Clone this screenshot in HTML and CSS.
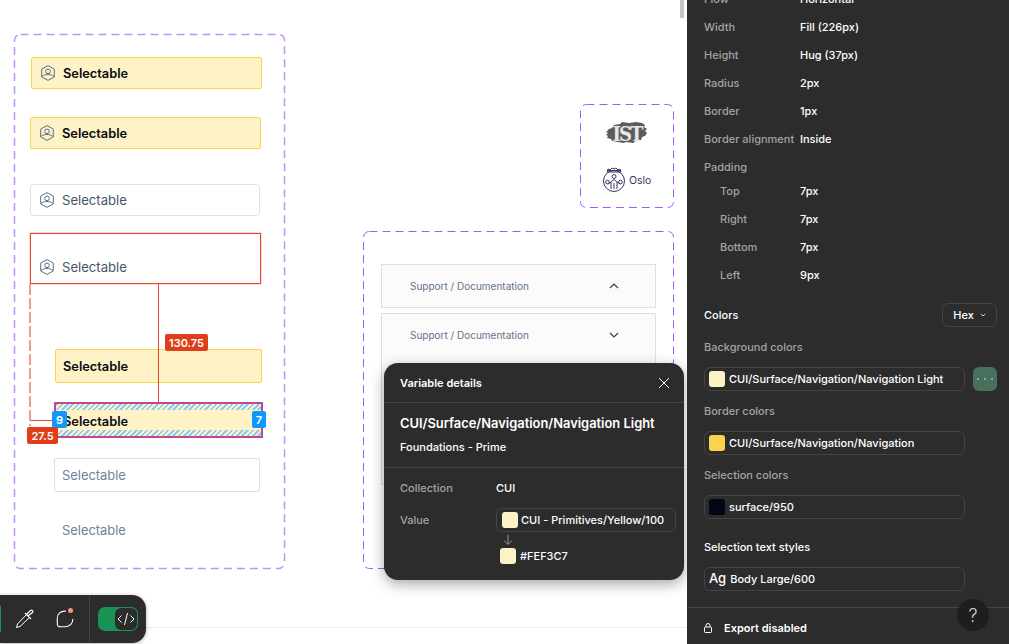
FILE: index.html
```html
<!DOCTYPE html>
<html lang="en">
<head>
    <meta charset="utf-8">
    <title>Selectable - Dev mode</title>
    <link rel="stylesheet" href="styles.css">
</head>
<body>
<svg class="defs" width="0" height="0">
    <symbol id="hexuser" viewBox="0 0 16 16">
        <path d="M8 .6l6.300 3.500v7.800L8 15.400l-6.300-3.500V4.100z" fill="none" stroke="currentColor" stroke-width="1" stroke-linejoin="round"/>
        <circle cx="8" cy="6.400" r="2.300" fill="none" stroke="currentColor" stroke-width="1"/>
        <path d="M2 11.500c1.400-1.400 3.600-2 6-2s4.600.6 6 2" fill="none" stroke="currentColor" stroke-width="1"/>
    </symbol>
</svg>

<div class="page">
    <div class="canvas">
        <div class="scroll-thumb"></div>
        <div class="floor-line"></div>

        <!-- frame: selectable states -->
        <svg class="frame frame-states"><rect rx="6" ry="6"></rect></svg>
        <div class="item item-1 yellow"><svg class="hex"><use href="#hexuser"/></svg><span class="lbl strong">Selectable</span></div>
        <div class="item item-2 yellow"><svg class="hex"><use href="#hexuser"/></svg><span class="lbl strong">Selectable</span></div>
        <div class="item item-3 plain"><svg class="hex"><use href="#hexuser"/></svg><span class="lbl">Selectable</span></div>
        <div class="item item-4 measured"><svg class="hex"><use href="#hexuser"/></svg><span class="lbl">Selectable</span></div>
        <div class="item item-5 yellow"><span class="lbl strong">Selectable</span></div>
        <div class="item item-6 yellow picked">
            <div class="hatch hatch-top"></div>
            <div class="hatch hatch-bottom"></div>
            <span class="lbl strong">Selectable</span>
        </div>
        <div class="item item-7 outline"><span class="lbl muted">Selectable</span></div>
        <div class="item item-8"><span class="lbl muted">Selectable</span></div>

        <!-- red measure lines -->
        <div class="guide guide-v"></div>
        <div class="guide guide-h"></div>
        <div class="guide-dash"></div>
        <div class="tag tag-red tag-130">130.75</div>
        <div class="tag tag-blue tag-9">9</div>
        <div class="tag tag-blue tag-7">7</div>
        <div class="tag tag-red tag-27">27.5</div>

        <!-- frame: logos -->
        <svg class="frame frame-logos"><rect rx="6" ry="6"></rect></svg>
        <div class="logo-ist">
            <svg width="44" height="26" viewBox="0 0 44 26"><path d="M1 11l3-3 3-1 2-3 6-1 2-2 7 1 7-1 6 1 3 2-1 2 3 2-2 2 2 2-2 3-3 1-1 3-5 1-3 2-7-1-2 1-6-1-6-1-1-2-4-1 1-2-2-1 2-2z" fill="#5c5c5c"/></svg>
            <span class="ist-text">IST</span>
        </div>
        <div class="logo-oslo">
            <svg width="24" height="27" viewBox="0 0 24 27" fill="none" stroke="#3b3566" stroke-width="1">
                <path d="M6 4l2 1 2-2 2 1 2-1 2 2 2-1 1 3H5z"/>
                <path d="M6 5.500h12"/>
                <circle cx="12" cy="16" r="10.500"/>
                <circle cx="12" cy="11.500" r="2"/>
                <path d="M9 24v-7l3-2.500 3 2.500v7M9 17l-3 2M15 17l3 2M12 18v6"/>
                <circle cx="5.500" cy="17" r="1.800"/>
                <circle cx="18.500" cy="17" r="1.800"/>
            </svg>
            <span class="oslo-name">Oslo</span>
        </div>

        <!-- frame: accordion -->
        <svg class="frame frame-accordion"><rect rx="6" ry="6"></rect></svg>
        <div class="acc acc-open">
            <span>Support / Documentation</span>
            <svg width="12" height="12" viewBox="0 0 12 12"><path d="M2 8l4-4 4 4" fill="none" stroke="#334155" stroke-width="1.200"/></svg>
        </div>
        <div class="acc acc-closed">
            <span>Support / Documentation</span>
            <svg width="12" height="12" viewBox="0 0 12 12"><path d="M2 4l4 4 4-4" fill="none" stroke="#334155" stroke-width="1.200"/></svg>
        </div>

        <!-- bottom toolbar -->
        <div class="toolbar">
            <div class="tool-active"></div>
            <svg class="tool-dropper" width="20" height="20" viewBox="0 0 20 20" fill="none" stroke="#fff" stroke-width="1">
                <path d="M11.500 5.500l-9 9.500-1 3.500 3.500-1 9.500-9z"/>
                <path d="M10 4l6 6M13 7l4.500-3.500c1-1.200-.6-3.200-2-2L12 5" stroke-width="1.200"/>
            </svg>
            <div class="tool-comment">
                <svg width="20" height="20" viewBox="0 0 20 20" fill="none" stroke="#fff" stroke-width="1.100"><path d="M11 2.200C6 1.500 2 5 2.200 9.800c.1 2.500.1 5.500.3 6.400.2.900.7 1.300 1.600 1.400 2 .2 4.500.2 6.400.1 4.300-.3 7.500-3.300 7.300-7.700"/></svg>
                <i class="dot"></i>
            </div>
            <div class="tool-sep"></div>
            <div class="toggle">
                <div class="knob">
                    <svg width="18" height="14" viewBox="0 0 18 14" fill="none" stroke="#fff" stroke-width="1"><path d="M4.500 3.500L1 7l3.500 3.500M13.500 3.500L17 7l-3.500 3.500M10.500 1l-3 12"/></svg>
                </div>
            </div>
        </div>

        <!-- variable popup -->
        <div class="popup">
            <div class="popup-head">
                <span>Variable details</span>
                <svg width="12" height="12" viewBox="0 0 12 12"><path d="M1 1l10 10M11 1L1 11" stroke="#fff" stroke-width="1"/></svg>
            </div>
            <div class="popup-title">
                <h3>CUI/Surface/Navigation/Navigation Light</h3>
                <p>Foundations - Prime</p>
            </div>
            <div class="popup-body">
                <div class="popup-row"><span class="popup-key">Collection</span><span>CUI</span></div>
                <div class="popup-row popup-value">
                    <span class="popup-key">Value</span>
                    <div class="chain">
                        <div class="chip"><i class="swatch sw-light"></i>CUI - Primitives/Yellow/100</div>
                        <svg class="arrow" width="12" height="12" viewBox="0 0 12 12" fill="none" stroke="#9a9a9a" stroke-width="1"><path d="M6 1v9M2 6.500L6 10.500l4-4"/></svg>
                        <div class="hex-line"><i class="swatch sw-light"></i>#FEF3C7</div>
                    </div>
                </div>
            </div>
        </div>
    </div>

    <aside class="panel">
        <div class="props">
            <div class="prop"><span>Flow</span><b>Horizontal</b></div>
            <div class="prop"><span>Width</span><b>Fill (226px)</b></div>
            <div class="prop"><span>Height</span><b>Hug (37px)</b></div>
            <div class="prop"><span>Radius</span><b>2px</b></div>
            <div class="prop"><span>Border</span><b>1px</b></div>
            <div class="prop"><span>Border alignment</span><b>Inside</b></div>
            <div class="prop"><span>Padding</span></div>
            <div class="sub">
                <div class="prop"><span>Top</span><b>7px</b></div>
                <div class="prop"><span>Right</span><b>7px</b></div>
                <div class="prop"><span>Bottom</span><b>7px</b></div>
                <div class="prop"><span>Left</span><b>9px</b></div>
            </div>
        </div>

        <div class="colors-head">
            <span>Colors</span>
            <div class="hex-btn">Hex <svg width="6" height="4" viewBox="0 0 6 4"><path d="M.8.8L3 3 5.200.8" fill="none" stroke="#fff" stroke-width=".8"/></svg></div>
        </div>

        <div class="group-title">Background colors</div>
        <div class="field-row">
            <div class="field"><i class="swatch sw-light"></i>CUI/Surface/Navigation/Navigation Light</div>
            <div class="more"><i></i><i></i><i></i></div>
        </div>
        <div class="group-title">Border colors</div>
        <div class="field-row">
            <div class="field"><i class="swatch sw-nav"></i>CUI/Surface/Navigation/Navigation</div>
        </div>
        <div class="group-title">Selection colors</div>
        <div class="field-row">
            <div class="field"><i class="swatch sw-dark"></i>surface/950</div>
        </div>
        <div class="group-title group-white">Selection text styles</div>
        <div class="field-row">
            <div class="field"><span class="ag">Ag</span>Body Large/600</div>
        </div>

        <div class="export">
            <svg width="8" height="10" viewBox="0 0 8 10" fill="none" stroke="#fff" stroke-width="1"><rect x=".5" y="4" width="7" height="5.500" rx=".8"/><path d="M2 4V2.500a2 2 0 0 1 4 0V4"/></svg>
            <span>Export disabled</span>
        </div>
        <div class="help">?</div>
    </aside>
</div>
</body>
</html>
```

FILE: styles.css
```css
* {
    margin: 0;
    padding: 0;
    box-sizing: border-box;
}
html, body {
    height: 100%;
    overflow: hidden;
}
body {
    font-family: "Inter", "Liberation Sans", sans-serif;
    font-size: 11px;
    color: #fff;
    background: #fff;
}
.defs {
    position: absolute;
}
.page {
    display: flex;
    width: 1009px;
    height: 644px;
}

/* canvas: everything in here sits on a free design canvas */
.canvas {
    position: relative;
    width: 687px;
    height: 644px;
    overflow: hidden;
    background: #fff;
}
.scroll-thumb {
    position: absolute;
    left: 680px;
    top: 0;
    width: 4px;
    height: 18px;
    background: #c4c4c4;
}
.floor-line {
    position: absolute;
    left: 146px;
    top: 627px;
    width: 541px;
    height: 1px;
    background: #eeeeee;
}
.frame {
    position: absolute;
    overflow: visible;
}
.frame rect {
    x: .5px;
    y: .5px;
    width: calc(100% - 1px);
    height: calc(100% - 1px);
    fill: none;
    stroke: #a259ff;
    stroke-dasharray: 8 5;
}
.frame-states {
    left: 14px;
    top: 34px;
    width: 271px;
    height: 535px;
    opacity: .6;
}
.frame-states rect {
    stroke: #9747ff;
    stroke-width: 1.500;
}
.frame-logos {
    left: 580px;
    top: 104px;
    width: 94px;
    height: 104px;
}
.frame-accordion {
    left: 363px;
    top: 231px;
    width: 311px;
    height: 338px;
}

.item {
    position: absolute;
    display: flex;
    align-items: center;
    padding-left: 8px;
    border-radius: 2px;
}
.item-1 { left: 31px; top: 57px; width: 231px; height: 32px; }
.item-2 { left: 30px; top: 117px; width: 231px; height: 32px; }
.item-3 { left: 30px; top: 184px; width: 230px; height: 32px; }
.item-4 { left: 30px; top: 233px; width: 231px; height: 51px; align-items: flex-end; padding-bottom: 8px; }
.item-5 { left: 55px; top: 349px; width: 207px; height: 34px; padding-left: 7px; }
.item-6 { left: 54px; top: 402px; width: 209px; height: 36px; }
.item-7 { left: 54px; top: 458px; width: 206px; height: 34px; padding-left: 7px; }
.item-8 { left: 54px; top: 513px; width: 206px; height: 34px; padding-left: 8px; }

.yellow {
    background: #fef3c7;
    border: 1px solid #fcd34d;
}
.plain {
    background: #fff;
    border: 1px solid #d9e0ec;
    border-radius: 4px;
}
.outline {
    background: #fff;
    border: 1px solid #d9e0ec;
}
.measured {
    border: 1px solid #e5482a;
    border-radius: 0;
    box-shadow: 0 0 0 .5px rgba(229, 72, 42, .4);
}
.picked {
    border: 1px solid #9747ff;
    border-radius: 0;
    box-shadow: inset 0 0 0 1px #e5482a;
}
.hatch {
    position: absolute;
    left: 1px;
    right: 1px;
    height: 6px;
    background: repeating-linear-gradient(135deg, #8ccbf5 0, #8ccbf5 1.750px, #fef3c7 1.750px, #fef3c7 3.750px);
}
.hatch-top { top: 1px; }
.hatch-bottom { bottom: 1px; }
.hex {
    width: 16px;
    height: 16px;
    color: #5d6e88;
    flex: none;
    margin-right: 7px;
}
.lbl {
    font-size: 13.100px;
    line-height: 16px;
    color: #475569;
}
.strong {
    padding-top: 2px;
    font-size: 12.800px;
    font-weight: 600;
    color: #0a0a14;
    box-sizing: content-box;
}
.picked .strong {
    padding-top: 3px;
}
.muted {
    padding-top: 2px;
    font-size: 12.900px;
    color: #71819a;
    box-sizing: content-box;
}

.guide {
    position: absolute;
    background: #e5482a;
}
.guide-v {
    left: 158px;
    top: 284px;
    width: 1px;
    height: 119px;
}
.guide-h {
    left: 30px;
    top: 420px;
    width: 25px;
    height: 1px;
}
.guide-dash {
    position: absolute;
    left: 29px;
    top: 284px;
    width: 2px;
    height: 142px;
    background: repeating-linear-gradient(180deg, #f19e8c 0, #f19e8c 11px, transparent 11px, transparent 14px);
}
.tag {
    position: absolute;
    display: flex;
    align-items: center;
    justify-content: center;
    border-radius: 2px;
    font-size: 11px;
    font-weight: 600;
    color: #fff;
}
.tag-red { background: #e03e1a; }
.tag-blue { background: #0d99ff; }
.tag-130 { left: 165px; top: 334px; width: 43px; height: 17px; }
.tag-27 { left: 27px; top: 427px; width: 31px; height: 17px; }
.tag-9 { left: 52px; top: 411px; width: 15px; height: 17px; }
.tag-7 { left: 252px; top: 411px; width: 14px; height: 17px; }

.logo-ist {
    position: absolute;
    left: 605px;
    top: 121px;
    width: 44px;
    height: 26px;
}
.ist-text {
    position: absolute;
    left: 0;
    right: 0;
    top: 1px;
    text-align: center;
    font-family: "DejaVu Serif Condensed", "DejaVu Serif", serif;
    font-weight: 700;
    font-size: 20px;
    line-height: 24px;
    letter-spacing: -2px;
    color: #e6e6e6;
}
.logo-oslo {
    position: absolute;
    left: 602px;
    top: 165px;
    display: flex;
    align-items: center;
    gap: 3px;
    font-size: 10.500px;
    color: #3b3566;
}
.oslo-name {
    padding-top: 3px;
}

.acc {
    position: absolute;
    left: 381px;
    width: 275px;
    display: flex;
    justify-content: space-between;
    align-items: center;
    padding: 0 35px 0 28px;
    background: #fbfbfc;
    border: 1px solid #d9e0ec;
    font-size: 10px;
    color: #64748b;
}
.acc-open {
    top: 264px;
    height: 44px;
}
.acc-closed {
    top: 313px;
    height: 172px;
    align-items: flex-start;
    padding-top: 15px;
}

.toolbar {
    position: absolute;
    left: 0;
    top: 595px;
    width: 146px;
    height: 48px;
    display: flex;
    align-items: center;
    background: #2c2c2c;
    border-radius: 0 14px 14px 0;
    box-shadow: 0 1px 4px rgba(0, 0, 0, .3);
}
.tool-active {
    width: 1px;
    height: 26px;
    background: #1a9255;
    margin-right: 14px;
}
.tool-dropper {
    margin-right: 20px;
}
.tool-comment {
    position: relative;
    width: 20px;
    height: 20px;
    margin-right: 14px;
}
.dot {
    position: absolute;
    right: 2px;
    top: -1px;
    width: 5px;
    height: 5px;
    border-radius: 50%;
    background: #f5938a;
}
.tool-sep {
    width: 1px;
    height: 48px;
    background: #444;
    margin-right: 8px;
}
.toggle {
    width: 40px;
    height: 24px;
    display: flex;
    justify-content: flex-end;
    align-items: center;
    padding-right: 1px;
    background: #1a9255;
    border-radius: 7px;
}
.knob {
    width: 22px;
    height: 22px;
    display: flex;
    align-items: center;
    justify-content: center;
    background: #2c2c2c;
    border-radius: 6px;
}

/* popup */
.popup {
    position: absolute;
    left: 384px;
    top: 363px;
    width: 300px;
    height: 217px;
    background: #2c2c2c;
    border-radius: 14px;
    box-shadow: 0 4px 14px rgba(0, 0, 0, .35);
}
.popup-head {
    height: 40px;
    display: flex;
    justify-content: space-between;
    align-items: center;
    padding: 0 14px 0 16px;
    border-bottom: 1px solid #444;
    font-weight: 600;
}
.popup-title {
    height: 65px;
    padding: 13px 16px 0;
    border-bottom: 1px solid #444;
}
.popup-title h3 {
    font-size: 12.900px;
    line-height: 16px;
    font-weight: 600;
    white-space: nowrap;
}
.popup-title p {
    margin-top: 8px;
    line-height: 14px;
    font-weight: 500;
}
.popup-body {
    padding: 13px 8px 0 16px;
}
.popup-row {
    display: flex;
    line-height: 14px;
    font-weight: 500;
}
.popup-key {
    width: 96px;
    flex: none;
    color: #a3a3a3;
}
.popup-value {
    margin-top: 13px;
}
.popup-value .popup-key {
    margin-top: 5px;
}
.chain {
    flex: 1;
}
.chip {
    height: 24px;
    display: flex;
    align-items: center;
    gap: 3px;
    padding-left: 5px;
    border: 1px solid #444;
    border-radius: 6px;
    white-space: nowrap;
}
.arrow {
    display: block;
    margin: 2px 0 2px 6px;
}
.hex-line {
    display: flex;
    align-items: center;
    gap: 4px;
    padding-left: 4px;
}
.swatch {
    display: block;
    flex: none;
    width: 16px;
    height: 16px;
    border-radius: 3px;
}
.sw-light { background: #fef3c7; }
.sw-nav { background: #fcd34d; }
.sw-dark { background: #020617; }

/* right panel */
.panel {
    position: relative;
    width: 322px;
    height: 644px;
    overflow: hidden;
    background: #2c2c2c;
    font-weight: 500;
}
.props {
    margin-top: -15px;
    padding-left: 17px;
}
.prop {
    display: flex;
    height: 28px;
    align-items: center;
}
.prop span {
    width: 96px;
    flex: none;
    color: #a3a3a3;
    white-space: nowrap;
}
.prop b {
    font-weight: 500;
}
.sub {
    margin-top: -4px;
}
.sub .prop span {
    padding-left: 16px;
}
.colors-head {
    margin: 14px 12px 0 17px;
    height: 24px;
    display: flex;
    justify-content: space-between;
    align-items: center;
}
.hex-btn {
    width: 55px;
    height: 24px;
    display: flex;
    align-items: center;
    justify-content: center;
    gap: 6px;
    border: 1px solid #444;
    border-radius: 6px;
}
.group-title {
    margin: 12px 0 0 17px;
    line-height: 16px;
    color: #a3a3a3;
}
.group-white {
    margin-top: 20px;
    color: #fff;
}
.field-row {
    display: flex;
    gap: 8px;
    margin: 12px 12px 0 17px;
}
.field {
    width: 261px;
    height: 24px;
    display: flex;
    align-items: center;
    gap: 4px;
    padding-left: 4px;
    border: 1px solid #444;
    border-radius: 6px;
}
.ag {
    font-size: 13px;
    line-height: 18px;
    margin-top: -3px;
}
.more {
    width: 24px;
    height: 24px;
    display: flex;
    align-items: center;
    justify-content: center;
    gap: 5px;
    background: #4a6f5c;
    border-radius: 6px;
}
.more i {
    width: 2px;
    height: 2px;
    border-radius: 50%;
    background: #6fdc98;
}
.export {
    margin-top: 16px;
    height: 37px;
    display: flex;
    align-items: center;
    gap: 12px;
    padding: 4px 0 0 17px;
    border-top: 1px solid #444;
    font-weight: 600;
}
.help {
    position: absolute;
    left: 270px;
    top: 599px;
    width: 32px;
    height: 32px;
    display: flex;
    align-items: center;
    justify-content: center;
    border-radius: 50%;
    background: #1e1e1e;
    font-size: 18px;
    font-weight: 300;
    color: #d4d4d4;
}
```
